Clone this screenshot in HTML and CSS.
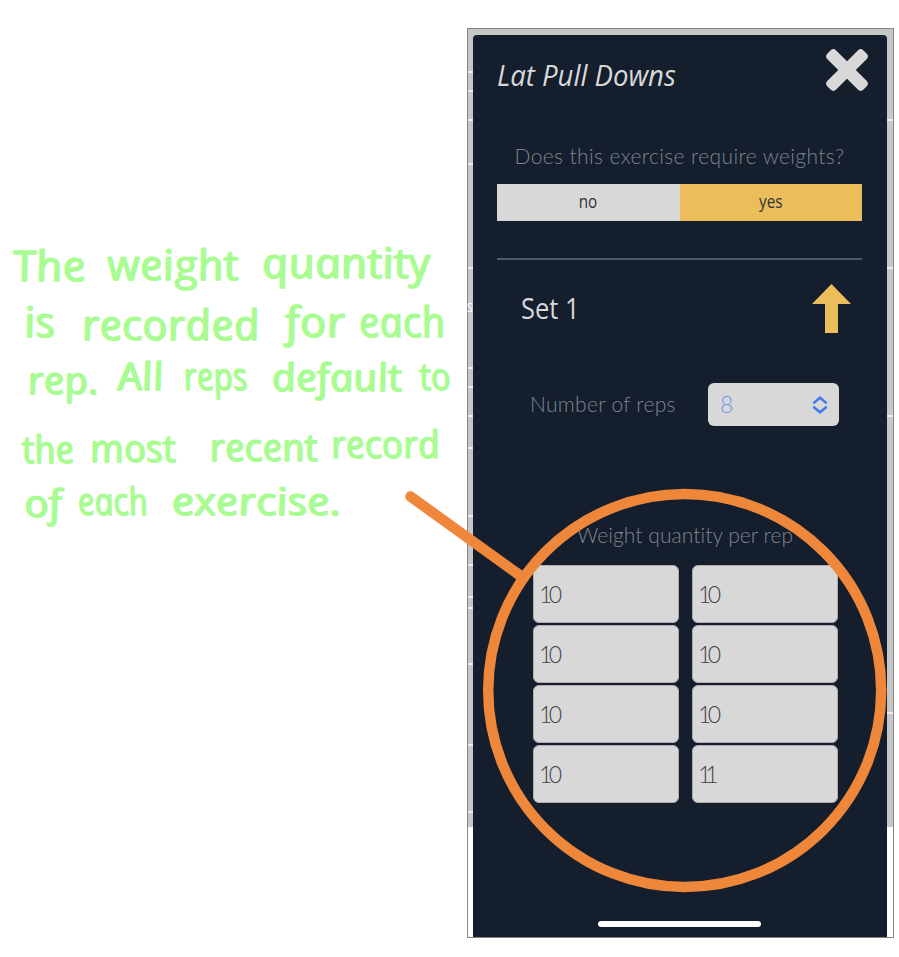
FILE: index.html
```html
<!DOCTYPE html>
<html lang="en">
<head>
<meta charset="utf-8">
<title>Lat Pull Downs</title>
<link rel="stylesheet" href="styles.css">
</head>
<body>
<main class="board">
  <aside class="note">
    <svg class="handwriting" viewBox="0 0 467 330" width="467" height="330">
      <g transform="translate(1 50) skewX(12)">
        <text x="14" y="1" textLength="73" lengthAdjust="spacingAndGlyphs">The</text>
        <text x="109" y="0" textLength="131" lengthAdjust="spacingAndGlyphs">weight</text>
        <text x="264" y="-2" textLength="168" lengthAdjust="spacingAndGlyphs">quantity</text>
      </g>
      <g transform="translate(1 109) skewX(12)">
        <text x="26" y="-2" textLength="31" lengthAdjust="spacingAndGlyphs">is</text>
        <text x="83" y="1" textLength="178" lengthAdjust="spacingAndGlyphs">recorded</text>
        <text x="287" y="-2" textLength="60" lengthAdjust="spacingAndGlyphs">for</text>
        <text x="361" y="-2" textLength="86" lengthAdjust="spacingAndGlyphs">each</text>
      </g>
      <g class="small" transform="translate(1 161) skewX(12)">
        <text x="28" y="3" textLength="71" lengthAdjust="spacingAndGlyphs">rep.</text>
        <text x="119" y="-1" textLength="46" lengthAdjust="spacingAndGlyphs">All</text>
        <text x="185" y="-1" textLength="64" lengthAdjust="spacingAndGlyphs">reps</text>
        <text x="273" y="0" textLength="130" lengthAdjust="spacingAndGlyphs">default</text>
        <text x="421" y="-1" textLength="31" lengthAdjust="spacingAndGlyphs">to</text>
      </g>
      <g class="small" transform="translate(1 232) skewX(12)">
        <text x="23" y="1" textLength="52" lengthAdjust="spacingAndGlyphs">the</text>
        <text x="91" y="0" textLength="86" lengthAdjust="spacingAndGlyphs">most</text>
        <text x="211" y="-1" textLength="108" lengthAdjust="spacingAndGlyphs">recent</text>
        <text x="333" y="-4" textLength="109" lengthAdjust="spacingAndGlyphs">record</text>
      </g>
      <g class="small" transform="translate(1 285) skewX(12)">
        <text x="25" y="2" textLength="38" lengthAdjust="spacingAndGlyphs">of</text>
        <text x="79" y="0" textLength="70" lengthAdjust="spacingAndGlyphs">each</text>
        <text x="173" y="0" textLength="169" lengthAdjust="spacingAndGlyphs">exercise.</text>
      </g>
    </svg>
  </aside>

  <section class="phone">
    <div class="edge left">
      <i></i><i></i><i></i><i></i><i></i><b>s</b><i></i><i></i><i></i><i></i><i></i><i></i><i></i><i></i><i></i><i></i><i></i>
    </div>
    <div class="panel">
      <header class="head">
        <h1><span>Lat Pull Downs</span></h1>
        <svg class="close" viewBox="0 0 44 44" width="44" height="44"><g transform="rotate(45 22 22)"><rect x="-3.500" y="15.800" width="51" height="12.400" rx="4"/><rect x="15.800" y="-3.500" width="12.400" height="51" rx="4"/></g></svg>
      </header>
      <p class="question">Does this exercise require weights?</p>
      <div class="toggle">
        <button class="no"><span>no</span></button>
        <button class="yes"><span>yes</span></button>
      </div>
      <hr>
      <div class="set">
        <h2><span>Set 1</span></h2>
        <svg class="arrow" viewBox="0 0 39 50" width="39" height="50"><path d="M19.500 0 39 20H26V49H13V20H0Z"/></svg>
      </div>
      <div class="reps">
        <span class="label">Number of reps</span>
        <div class="select"><span>8</span>
          <svg viewBox="0 0 16 18" width="16" height="18"><path d="M1.300 7.200 8 1.700 14.700 7.200M1.300 10.800 8 16.300 14.700 10.800"/></svg>
        </div>
      </div>
      <p class="weights-label">Weight quantity per rep</p>
      <div class="weights">
        <div>10</div><div>10</div>
        <div>10</div><div>10</div>
        <div>10</div><div>10</div>
        <div>10</div><div class="narrow">11</div>
      </div>
      <div class="home"></div>
    </div>
    <div class="edge right"><i></i><i></i><i></i><i></i></div>
  </section>

  <svg class="callout" viewBox="0 0 899 957" width="899" height="957">
    <circle cx="684.700" cy="690.500" r="196.500"/>
    <path class="lead" d="M410.500 496.500 518 574"/>
    <path class="cap" d="M516 572.500 522 577"/>
  </svg>
</main>
</body>
</html>
```
FILE: styles.css
```css
* { box-sizing: border-box; }
body { margin: 0; background: #fff; font-family: Lato, sans-serif; font-variant-ligatures: none; }
.board { position: relative; display: flex; width: 899px; height: 957px; overflow: hidden; }

.note { width: 467px; padding-top: 230px; }
.handwriting { display: block; overflow: visible; font: italic 400 42px "Open Sans", sans-serif; fill: #a8fc92; stroke: #a8fc92; stroke-width: 1.4px; stroke-linejoin: round; }
.handwriting .small { font-size: 38px; }

.phone { display: flex; width: 427px; height: 910px; margin-top: 28px; border: 1px solid #858585; background: linear-gradient(#c7c7c7 798px, #fff 798px); }
.edge { position: relative; flex: none; width: 5px; }
.edge.right { width: 6px; }
.edge i { position: absolute; left: 0; width: 100%; height: 2px; background: #eee; }
.edge b { position: absolute; left: -1px; top: 267px; color: #fff; font: 16px/20px "Open Sans", sans-serif; transform: scaleX(.75); transform-origin: left; }
.left i:nth-child(1) { top: 42px; }
.left i:nth-child(2) { top: 61px; }
.left i:nth-child(3) { top: 90px; }
.left i:nth-child(4) { top: 134px; }
.left i:nth-child(5) { top: 238px; }
.left i:nth-child(7) { top: 338px; }
.left i:nth-child(8) { top: 357px; }
.left i:nth-child(9) { top: 386px; }
.left i:nth-child(10) { top: 418px; }
.left i:nth-child(11) { top: 486px; }
.left i:nth-child(12) { top: 535px; }
.left i:nth-child(13) { top: 567px; }
.left i:nth-child(14) { top: 578px; }
.left i:nth-child(15) { top: 634px; }
.left i:nth-child(16) { top: 715px; }
.left i:nth-child(17) { top: 782px; }
.right i:nth-child(1) { top: 90px; }
.right i:nth-child(2) { top: 238px; }
.right i:nth-child(3) { top: 386px; }
.right i:nth-child(4) { top: 683px; }

.panel { flex: none; width: 414px; margin-top: 6px; padding: 0 25px 0 24px; border-radius: 4px 4px 0 0; background: #141e2d; color: #d8d8d8; }
.head { display: flex; justify-content: space-between; height: 109px; margin-right: -7px; padding-top: 13px; }
h1, h2, p { margin: 0; font-weight: 400; white-space: nowrap; }
h1 { font: italic 400 30px/54px "Open Sans", sans-serif; }
h1 span, h2 span, .toggle span { display: inline-block; transform: scaleX(.85); }
h1 span { transform: scaleX(.918); transform-origin: left; }
.close { flex: none; overflow: visible; fill: #d8d8d8; }
.question, .label, .weights-label { color: #7f848d; font-size: 21px; font-weight: 300; line-height: 24px; }
.question { text-align: center; letter-spacing: .38px; }
.toggle { display: grid; grid-template-columns: 182.5px 182.5px; height: 37px; margin-top: 16px; }
.toggle button { padding: 0; border: 0; font: 400 18px/33px "Open Sans", sans-serif; color: #303439; }
.toggle span { position: relative; top: -1px; }
.toggle .no { background: #d8d8d8; }
.toggle .yes { background: #ecbe5b; }
hr { height: 2px; margin: 37px 0 0; border: 0; background: #4d596b; }
.set { display: flex; justify-content: space-between; height: 123px; padding: 24px 11px 0 24px; }
h2 { font: 400 30px/48px "Open Sans", sans-serif; }
h2 span { transform: scaleX(.85); transform-origin: left; }
.arrow path { fill: #ecbe5b; }
.reps { display: flex; align-items: center; height: 43px; padding-left: 33px; }
.label { width: 178px; padding-bottom: 2px; letter-spacing: .3px; }
.select { display: flex; align-items: center; justify-content: space-between; width: 131px; height: 43px; padding: 0 11px 0 12px; border-radius: 6px; background: #d8d8d8; color: #7099e6; font-size: 23px; font-weight: 300; }
.select span { padding-bottom: 1px; }
.select path { fill: none; stroke: #4479ec; stroke-width: 2.5; }
.weights-label { height: 24px; margin: 97px 0 0 80px; letter-spacing: .05px; }
.weights { display: grid; grid-template-columns: 146px 146px; grid-auto-rows: 58px; gap: 2px 13px; margin: 18px 0 0 36px; }
.weights div { display: flex; align-items: center; padding: 0 0 1px 5px; border: 1px solid #b5acb1; border-radius: 6px; background: #d8d8d8; color: #444; font-size: 23px; font-weight: 300; letter-spacing: -3.5px; }
.weights .narrow { letter-spacing: -6px; }
.home { width: 163px; height: 6px; margin: 118px auto 0 101px; border-radius: 3px; background: #fff; }

.callout { position: absolute; left: 0; top: 0; pointer-events: none; }
.callout circle, .callout path { fill: none; stroke: #ef873a; stroke-width: 10.5; }
.callout .lead { stroke-linecap: round; }
```
